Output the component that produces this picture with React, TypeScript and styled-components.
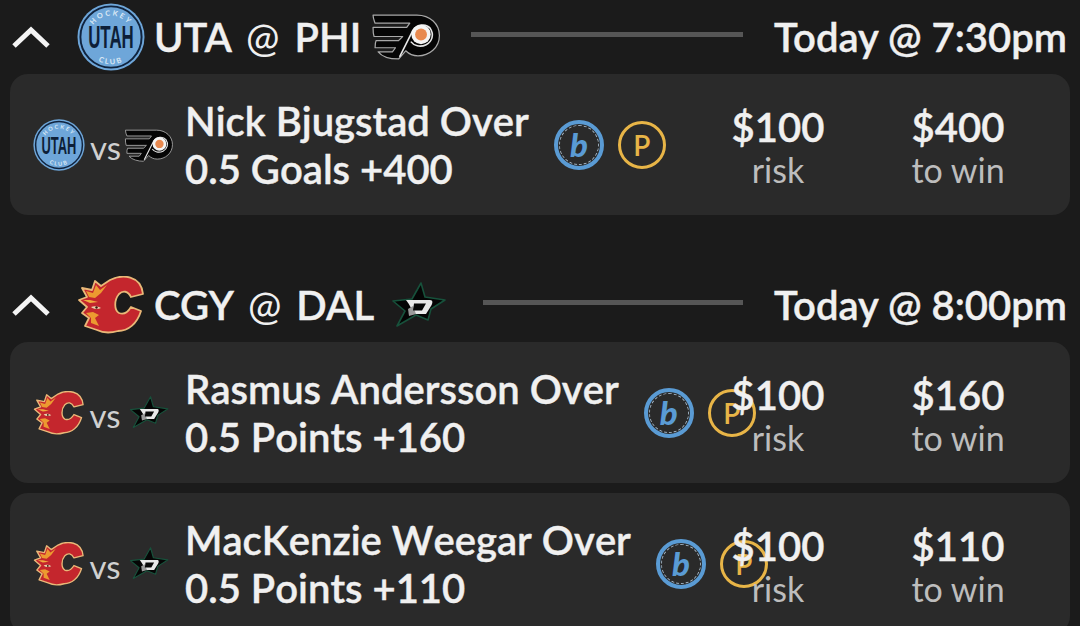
import React from "react";
import styled, { createGlobalStyle } from "styled-components";

const GlobalStyle = createGlobalStyle`
  html, body {
    margin: 0;
    height: 100%;
    overflow: hidden;
    background: #1b1b1b;
  }
  body {
    font-family: Lato, "Open Sans", sans-serif;
    color: #f0f0f0;
  }
`;

const Page = styled.div`
  display: flex;
  flex-direction: column;
  gap: 53px;
`;

const Section = styled.section`
  display: flex;
  flex-direction: column;
`;

const GameHeader = styled.header`
  display: flex;
  align-items: center;
  height: 74px;
  padding: 0 13px 0 12px;
  font-size: 40px;
  font-weight: 600;
  -webkit-text-stroke: 0.4px #f0f0f0;
  white-space: nowrap;
`;

const Chevron = styled.svg`
  width: 38px;
  height: 22px;
  margin-right: 27px;
  flex: none;
`;

const TeamCode = styled.span`
  margin-left: 9px;
`;

const TeamLogo = styled.span`
  display: flex;
  flex: none;
  margin: ${({ $lift }: { $lift: number }) => `0 0 ${$lift}px 10px`};
`;

const At = styled.span`
  margin: 0 15px 0 14px;
  font-weight: 400;
  -webkit-text-stroke: 0;
`;

const Rule = styled.div`
  flex: 1;
  height: 5px;
  margin: 0 31px 6px 30px;
  background: #565656;
`;

const Kickoff = styled.span`
  flex: none;
`;

const Bets = styled.div`
  display: flex;
  flex-direction: column;
  gap: 10px;
  padding: 0 10px;
`;

const Card = styled.article`
  display: flex;
  align-items: center;
  height: 141px;
  padding: 0 22px 0 23px;
  border-radius: 18px;
  background: #2a2a2a;
`;

const BetMain = styled.div`
  display: flex;
  align-items: center;
  flex: 1;
  min-width: 0;
`;

const Matchup = styled.div`
  display: flex;
  align-items: center;
  flex: none;
  width: 152px;
  font-size: 33px;
  color: #d0d0d0;
`;

const Versus = styled.span`
  margin: 6px 3px 0 5px;
  line-height: 1;
`;

const BetName = styled.div`
  flex: none;
  font-size: 40px;
  font-weight: 600;
  font-kerning: none;
  -webkit-text-stroke: 0.4px #f0f0f0;
  line-height: 48px;
  white-space: nowrap;
`;

const Badges = styled.div`
  display: flex;
  align-items: center;
  flex: none;
  gap: 14px;
  margin-left: 25px;
`;

const BookBadge = styled.div`
  display: flex;
  align-items: center;
  justify-content: center;
  box-sizing: border-box;
  width: 50px;
  height: 50px;
  border: 4px solid #5a9bd4;
  border-radius: 50%;
`;

const BookInner = styled.div`
  display: flex;
  align-items: center;
  justify-content: center;
  box-sizing: border-box;
  width: 40px;
  height: 40px;
  border: 1px dashed #9fb0bf;
  border-radius: 50%;
  color: #5a9bd4;
  font-size: 33px;
  font-weight: 900;
  font-style: italic;
  line-height: 1;
`;

const PropBadge = styled.div`
  display: flex;
  align-items: center;
  justify-content: center;
  box-sizing: border-box;
  width: 48px;
  height: 48px;
  border: 3px solid #e8b547;
  border-radius: 50%;
  color: #e8b547;
  font-size: 28px;
  font-weight: 600;
  line-height: 1;
`;

const Stat = styled.div`
  flex: none;
  width: 180px;
  padding-top: 1px;
  text-align: center;
`;

const StatValue = styled.div`
  font-size: 40px;
  font-weight: 600;
  -webkit-text-stroke: 0.4px #f0f0f0;
  line-height: 48px;
`;

const StatLabel = styled.div`
  font-size: 34px;
  line-height: 37px;
  color: #bdbdbd;
`;

type LogoProps = { height: number; id?: string };

const UtahLogo = ({ height, id = "main" }: LogoProps) => (
  <svg viewBox="0 0 70 70" height={height} width={height} style={{ flex: "none" }}>
    <defs>
      <path id={`utah-top-${id}`} d="M13 35 A22 22 0 0 1 57 35" />
      <path id={`utah-bottom-${id}`} d="M7 35 A28 28 0 0 0 63 35" />
    </defs>
    <circle cx="35" cy="35" r="34.5" fill="#6ea6d9" />
    <circle cx="35" cy="35" r="31.5" fill="none" stroke="#10243f" strokeWidth="2" />
    <text fontFamily="Lato, sans-serif" fontSize="7.5" fontWeight="700" fill="#dce9f5" letterSpacing="2">
      <textPath href={`#utah-top-${id}`} startOffset="50%" textAnchor="middle">HOCKEY</textPath>
    </text>
    <text fontFamily="Lato, sans-serif" fontSize="7.5" fontWeight="700" fill="#dce9f5" letterSpacing="2">
      <textPath href={`#utah-bottom-${id}`} startOffset="50%" textAnchor="middle">CLUB</textPath>
    </text>
    <text
      x="35"
      y="46.5"
      textAnchor="middle"
      fontFamily="'Liberation Sans', sans-serif"
      fontSize="32"
      fontWeight="700"
      fill="#0d1f38"
      textLength="47"
      lengthAdjust="spacingAndGlyphs"
    >
      UTAH
    </text>
  </svg>
);

const FlyersLogo = ({ height }: LogoProps) => (
  <svg viewBox="0 0 68 47" height={height} width={(height * 68) / 47} style={{ flex: "none" }}>
    <path
      d="M2 3H45C58 3 67 12 67 23C67 35 57 43 46 43C41 43 37 41 34 38L27 46C20 46 11 44 7 39H21L24 35H4C4 32 4 30 5 28H27L31 24H3C2 21 2 18 2 15H35L38 11H4C3 8 2 6 2 3Z"
      fill="#050505"
      stroke="#a8a8a8"
      strokeWidth="1.2"
      strokeLinejoin="round"
    />
    <path d="M28 44L41 18C45 12 54 11 58 16C62 22 60 29 54 32C48 35 42 33 39 29" fill="#050505" stroke="#e6e6e6" strokeWidth="1.6" />
    <circle cx="49" cy="22" r="9.5" fill="#f4f4f4" />
    <circle cx="49" cy="22" r="5.8" fill="#e8894f" />
  </svg>
);

const FlamesLogo = ({ height }: LogoProps) => (
  <svg viewBox="-1 0 68 58" height={height} width={(height * 68) / 58} style={{ flex: "none" }}>
    <path
      d="M65 18L53 21C50 15 45 14 41 18C36 24 36 34 41 37C46 39 50 36 53 31L63 35C59 48 50 55 40 55C33 57 25 57 19 54L7 50L11 42L4 37L9 31L1 24L9 21L4 12L14 14L17 5L23 10L32 4C44 -2 63 -1 65 18Z"
      fill="#c4262d"
      stroke="#e9b878"
      strokeWidth="1.8"
      strokeLinejoin="round"
    />
    <path d="M8 15L15 17L18 9L22 14L29 9L23 17L17 22L11 21Z" fill="#ec9a30" />
    <path d="M5 24L12 24L20 26L12 27Z" fill="#f0ab3e" />
    <path d="M8 37L15 36L21 39L17 42L21 50L13 47L13 42Z" fill="#ec9a30" />
    <path d="M13 31C16 29.5 20 30 23 32C20 33.5 16 33.5 13 31Z" fill="#e9d3ae" />
    <circle cx="18.5" cy="31.5" r="1.2" fill="#40120f" />
  </svg>
);

const StarsLogo = ({ height }: LogoProps) => (
  <svg viewBox="-8 0 69 46" height={height} width={(height * 69) / 46} style={{ flex: "none" }}>
    <polygon points="29,1 33,15 53,18 39,27 36,38 24,33 5,44 13,29 1,19 20,17" fill="#050505" stroke="#17513b" strokeWidth="1.6" strokeLinejoin="round" />
    <path d="M14 18H38C41 18 41 21 39 24L34 32H22C20 28 18 23 14 18Z" fill="#e9e9e9" />
    <path d="M16 27L21 24L24 32L17 34Z" fill="#9a9a9a" />
    <path d="M22 21.5H34L30 28.5H21Z" fill="#070707" />
  </svg>
);

const logos = { uta: UtahLogo, phi: FlyersLogo, cgy: FlamesLogo, dal: StarsLogo };
type TeamKey = keyof typeof logos;

type Bet = {
  line1: string;
  line2: string;
  risk: string;
  win: string;
};

type Game = {
  away: TeamKey;
  home: TeamKey;
  awayHeight: number;
  homeHeight: number;
  homeLift: number;
  awayCardHeight: number;
  homeCardHeight: number;
  time: string;
  bets: Bet[];
};

const games: Game[] = [
  {
    away: "uta",
    home: "phi",
    awayHeight: 68,
    homeHeight: 48,
    homeLift: 3,
    awayCardHeight: 52,
    homeCardHeight: 34,
    time: "Today @ 7:30pm",
    bets: [{ line1: "Nick Bjugstad Over", line2: "0.5 Goals +400", risk: "$100", win: "$400" }],
  },
  {
    away: "cgy",
    home: "dal",
    awayHeight: 58,
    homeHeight: 46,
    homeLift: 0,
    awayCardHeight: 44,
    homeCardHeight: 33,
    time: "Today @ 8:00pm",
    bets: [
      { line1: "Rasmus Andersson Over", line2: "0.5 Points +160", risk: "$100", win: "$160" },
      { line1: "MacKenzie Weegar Over", line2: "0.5 Points +110", risk: "$100", win: "$110" },
    ],
  },
];

const App: React.FC = () => (
  <>
    <GlobalStyle />
    <Page>
      {games.map((game) => {
        const Away = logos[game.away];
        const Home = logos[game.home];
        return (
          <Section key={game.time}>
            <GameHeader>
              <Chevron viewBox="0 0 38 22">
                <path d="M2 20L19 4L36 20" fill="none" stroke="#f4f4f4" strokeWidth="5" />
              </Chevron>
              <Away height={game.awayHeight} id={`${game.away}-head`} />
              <TeamCode>{game.away.toUpperCase()}</TeamCode>
              <At>@</At>
              <span>{game.home.toUpperCase()}</span>
              <TeamLogo $lift={game.homeLift}>
                <Home height={game.homeHeight} id={`${game.home}-head`} />
              </TeamLogo>
              <Rule />
              <Kickoff>{game.time}</Kickoff>
            </GameHeader>
            <Bets>
              {game.bets.map((bet) => (
                <Card key={bet.line1}>
                  <BetMain>
                    <Matchup>
                      <Away height={game.awayCardHeight} id={`${game.away}-${bet.win}`} />
                      <Versus>vs</Versus>
                      <Home height={game.homeCardHeight} id={`${game.home}-${bet.win}`} />
                    </Matchup>
                    <BetName>
                      {bet.line1}
                      <br />
                      {bet.line2}
                    </BetName>
                    <Badges>
                      <BookBadge>
                        <BookInner>b</BookInner>
                      </BookBadge>
                      <PropBadge>P</PropBadge>
                    </Badges>
                  </BetMain>
                  <Stat>
                    <StatValue>{bet.risk}</StatValue>
                    <StatLabel>risk</StatLabel>
                  </Stat>
                  <Stat>
                    <StatValue>{bet.win}</StatValue>
                    <StatLabel>to win</StatLabel>
                  </Stat>
                </Card>
              ))}
            </Bets>
          </Section>
        );
      })}
    </Page>
  </>
);

export default App;
